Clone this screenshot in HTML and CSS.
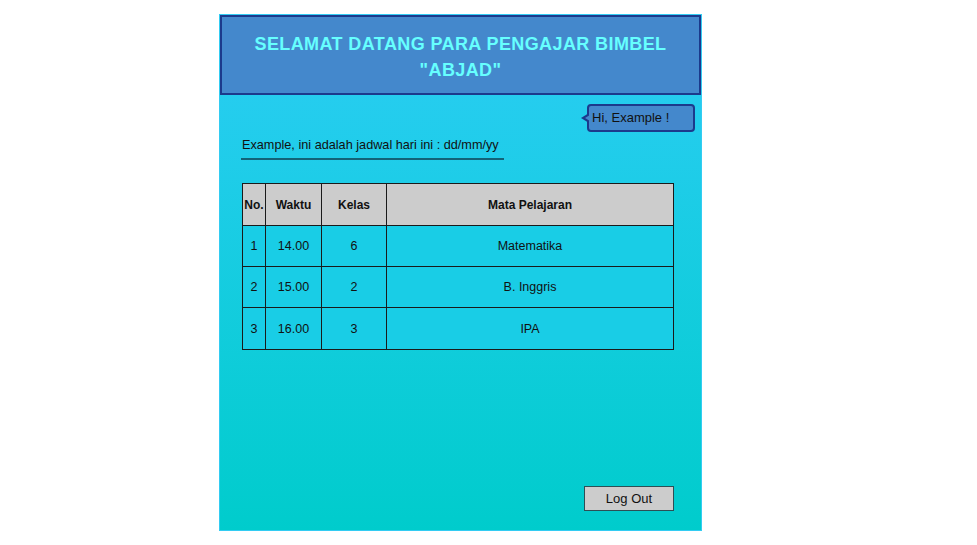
FILE: index.html
```html
<!DOCTYPE html>
<html lang="id">
<head>
<meta charset="utf-8">
<title>Bimbel ABJAD</title>
<link rel="stylesheet" href="styles.css">
</head>
<body>
<div class="screen">
  <header class="banner">
    <h1>SELAMAT DATANG PARA PENGAJAR BIMBEL<br>"ABJAD"</h1>
  </header>
  <div class="greet-row">
    <div class="bubble">Hi, Example !</div>
  </div>
  <div class="intro">
    <p class="intro-text">Example, ini adalah jadwal hari ini : dd/mm/yy</p>
  </div>
  <table class="schedule">
    <thead>
      <tr>
        <th class="c-no">No.</th>
        <th class="c-time">Waktu</th>
        <th class="c-class">Kelas</th>
        <th class="c-subject">Mata Pelajaran</th>
      </tr>
    </thead>
    <tbody>
      <tr><td>1</td><td>14.00</td><td>6</td><td>Matematika</td></tr>
      <tr><td>2</td><td>15.00</td><td>2</td><td>B. Inggris</td></tr>
      <tr><td>3</td><td>16.00</td><td>3</td><td>IPA</td></tr>
    </tbody>
  </table>
  <div class="actions">
    <button class="logout" type="button">Log Out</button>
  </div>
</div>
</body>
</html>
```
FILE: styles.css
```css
html, body {
  margin: 0;
  padding: 0;
  background: #ffffff;
}
body {
  font-family: "Liberation Sans", "DejaVu Sans", sans-serif;
  color: #111;
}
.screen {
  box-sizing: border-box;
  margin: 14px 0 0 219px;
  width: 483px;
  height: 517px;
  border: 1px solid #33ccf2;
  background: linear-gradient(to bottom, #2ccdf5 0%, #00cccc 100%);
  display: flex;
  flex-direction: column;
}
.banner {
  box-sizing: border-box;
  height: 80px;
  background: #4488cc;
  border: 2px solid #1c3a8c;
  display: flex;
  align-items: center;
  justify-content: center;
}
.banner h1 {
  margin: 0;
  font-size: 18px;
  line-height: 26px;
  font-weight: bold;
  color: #66ffff;
  text-align: center;
  letter-spacing: 0.4px;
  padding-top: 4px;
}
.greet-row {
  display: flex;
  justify-content: flex-end;
  padding: 9px 6px 0 0;
}
.bubble {
  position: relative;
  box-sizing: border-box;
  width: 108px;
  height: 28px;
  background: #4488cc;
  border: 2px solid #1c3a8c;
  border-radius: 4px;
  font-size: 13px;
  line-height: 24px;
  padding-left: 3px;
  color: #111;
}
.bubble::before {
  content: "";
  position: absolute;
  left: -8px;
  top: 7px;
  width: 0;
  height: 0;
  border-top: 5px solid transparent;
  border-bottom: 5px solid transparent;
  border-right: 8px solid #1c3a8c;
}
.bubble::after {
  content: "";
  position: absolute;
  left: -4px;
  top: 9px;
  width: 0;
  height: 0;
  border-top: 3px solid transparent;
  border-bottom: 3px solid transparent;
  border-right: 5px solid #4488cc;
}
.intro {
  padding: 4px 0 0 21px;
}
.intro-text {
  margin: 0;
  width: 262px;
  font-size: 12.7px;
  line-height: 18px;
  padding: 0 0 4px 1px;
  border-bottom: 2px solid #126378;
}
.schedule {
  margin: 23px 0 0 22px;
  width: 432px;
  border-collapse: collapse;
  table-layout: fixed;
  font-size: 12.5px;
}
.schedule th, .schedule td {
  border: 1px solid #1a1a1a;
  text-align: center;
  padding: 0;
}
.schedule th {
  height: 41px;
  background: #cccccc;
  font-weight: bold;
  font-size: 12px;
}
.schedule td {
  height: 40px;
  background: #19cde6;
}
.schedule tbody tr:last-child td {
  height: 41px;
}
.c-no { width: 22px; }
.c-time { width: 55px; }
.c-class { width: 64px; }
.c-subject { width: auto; }
.actions {
  margin-top: auto;
  display: flex;
  justify-content: flex-end;
  padding: 0 27px 19px 0;
}
.logout {
  box-sizing: border-box;
  width: 90px;
  height: 25px;
  background: #cccccc;
  border: 1.5px solid #2d4f55;
  font-family: inherit;
  font-size: 13px;
  color: #111;
  padding: 0;
}
```
